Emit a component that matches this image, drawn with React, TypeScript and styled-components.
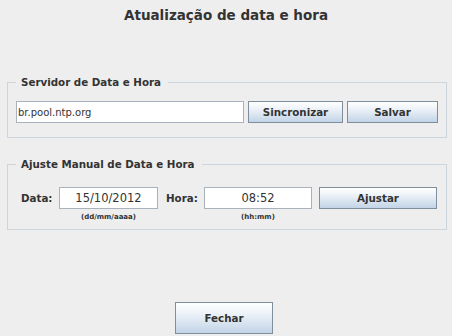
import React, { useState } from "react";
import styled, { createGlobalStyle } from "styled-components";

const GlobalStyle = createGlobalStyle`
  html, body {
    margin: 0;
    padding: 0;
    background: #eeeeee;
  }
  body {
    font-family: "DejaVu Sans", Verdana, sans-serif;
    color: #333333;
  }
`;

const Window = styled.div`
  width: 452px;
  height: 336px;
  display: flex;
  flex-direction: column;
  background: #eeeeee;
  box-sizing: border-box;
`;

const Title = styled.h1`
  margin: 0;
  padding-top: 7px;
  font-size: 13.5px;
  line-height: 16px;
  font-weight: bold;
  text-align: center;
  color: #333333;
`;

const Group = styled.fieldset<{ $top: number; $pt: number; $pb: number }>`
  margin: ${(p) => p.$top}px 5px 0 7px;
  padding: ${(p) => p.$pt}px 7px ${(p) => p.$pb}px 8px;
  border: 1px solid #ccd4dd;
  min-width: 0;
`;

const GroupTitle = styled.legend`
  padding: 0 7px 0 5px;
  font-size: 10.3px;
  line-height: 12px;
  font-weight: bold;
  color: #333333;
`;

const Row = styled.div`
  display: flex;
  align-items: flex-start;
`;

const TextField = styled.input<{ $w: number; $center?: boolean; $size: number }>`
  box-sizing: border-box;
  width: ${(p) => p.$w}px;
  height: 22px;
  margin: 0;
  padding: 0 1px;
  border: 1px solid #a9b3bd;
  background: #ffffff;
  font-family: "DejaVu Sans", sans-serif;
  font-size: ${(p) => p.$size}px;
  color: #333333;
  text-align: ${(p) => (p.$center ? "center" : "left")};
  outline: none;
`;

const Button = styled.button<{ $w: number; $h?: number; $ml?: number }>`
  box-sizing: border-box;
  width: ${(p) => p.$w}px;
  height: ${(p) => p.$h ?? 22}px;
  margin: 0 0 0 ${(p) => p.$ml ?? 0}px;
  padding: 0;
  border: 1px solid #7f8e9d;
  background: linear-gradient(to bottom, #ffffff 0%, #edf2f8 35%, #c2d4e7 100%);
  font-family: "DejaVu Sans", sans-serif;
  font-size: 10.3px;
  font-weight: bold;
  color: #333333;
  cursor: pointer;
`;

const Label = styled.span<{ $w: number; $ml?: number }>`
  width: ${(p) => p.$w}px;
  margin-left: ${(p) => p.$ml ?? 0}px;
  height: 22px;
  line-height: 22px;
  font-size: 10.3px;
  font-weight: bold;
  color: #333333;
  flex-shrink: 0;
`;

const FieldColumn = styled.div`
  display: flex;
  flex-direction: column;
  align-items: center;
`;

const Hint = styled.span`
  margin-top: 4px;
  font-size: 7px;
  line-height: 9px;
  font-weight: bold;
  color: #333333;
`;

const Footer = styled.div`
  margin-top: auto;
  padding: 0 4px 2px 0;
  display: flex;
  justify-content: center;
`;

export default function App() {
  const [server, setServer] = useState("br.pool.ntp.org");
  const [date, setDate] = useState("15/10/2012");
  const [time, setTime] = useState("08:52");

  return (
    <Window>
      <GlobalStyle />
      <Title>Atualização de data e hora</Title>

      <Group $top={53} $pt={13} $pb={14}>
        <GroupTitle>Servidor de Data e Hora</GroupTitle>
        <Row>
          <TextField $w={228} $size={10} value={server} onChange={(e) => setServer(e.target.value)} />
          <Button $w={95} $ml={4}>Sincronizar</Button>
          <Button $w={91} $ml={4}>Salvar</Button>
        </Row>
      </Group>

      <Group $top={20} $pt={17} $pb={7}>
        <GroupTitle>Ajuste Manual de Data e Hora</GroupTitle>
        <Row style={{ paddingLeft: 5 }}>
          <Label $w={38}>Data:</Label>
          <FieldColumn>
            <TextField $w={99} $size={11.5} $center value={date} onChange={(e) => setDate(e.target.value)} />
            <Hint>(dd/mm/aaaa)</Hint>
          </FieldColumn>
          <Label $w={38} $ml={8}>Hora:</Label>
          <FieldColumn>
            <TextField $w={108} $size={11.5} $center value={time} onChange={(e) => setTime(e.target.value)} />
            <Hint>(hh:mm)</Hint>
          </FieldColumn>
          <Button $w={118} $ml={7}>Ajustar</Button>
        </Row>
      </Group>

      <Footer>
        <Button $w={98} $h={32}>Fechar</Button>
      </Footer>
    </Window>
  );
}
